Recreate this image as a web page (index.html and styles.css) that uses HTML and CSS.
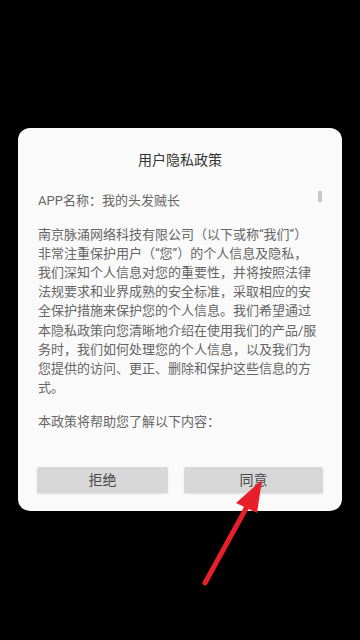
FILE: index.html
```html
<!DOCTYPE html>
<html lang="zh-CN">
<head>
<meta charset="utf-8">
<title>用户隐私政策</title>
<link rel="stylesheet" href="styles.css">
</head>
<body>
<div class="screen">
  <div class="dialog">
    <div class="title">用户隐私政策</div>
    <div class="scroll">
      <p class="para">APP名称：我的头发贼长</p>
      <p class="para">南京脉涌网络科技有限公司（以下或称“我们”）<br>非常注重保护用户（“您”）的个人信息及隐私，<br>我们深知个人信息对您的重要性，并将按照法律<br>法规要求和业界成熟的安全标准，采取相应的安<br>全保护措施来保护您的个人信息。我们希望通过<br>本隐私政策向您清晰地介绍在使用我们的产品/服<br>务时，我们如何处理您的个人信息，以及我们为<br>您提供的访问、更正、删除和保护这些信息的方<br>式。</p>
      <p class="para">本政策将帮助您了解以下内容：</p>
      <div class="scrollbar"></div>
    </div>
    <div class="actions">
      <div class="btn">拒绝</div>
      <div class="btn">同意</div>
    </div>
  </div>
</div>
<svg class="arrow" width="360" height="640" viewBox="0 0 360 640">
  <line x1="205" y1="583" x2="249" y2="503" stroke="#e81e28" stroke-width="5" stroke-linecap="round"/>
  <polygon points="262,480 236,503 257,513" fill="#e81e28"/>
</svg>
</body>
</html>
```
FILE: styles.css
```css
html, body {
  margin: 0;
  padding: 0;
  background: #000;
}
body {
  width: 360px;
  height: 640px;
  overflow: hidden;
  position: relative;
  font-family: Roboto, "Noto Sans CJK SC", sans-serif;
}
.screen {
  padding-top: 128px;
  padding-left: 18px;
}
.dialog {
  width: 324px;
  height: 383px;
  box-sizing: border-box;
  background: #fafafa;
  border-radius: 12px;
  display: flex;
  flex-direction: column;
  padding: 22px 19px 18px 19px;
}
.title {
  font-size: 14px;
  line-height: 20px;
  height: 20px;
  color: #333;
  text-align: center;
}
.scroll {
  position: relative;
  margin-top: 21px;
  height: 264px;
  overflow: hidden;
  padding-left: 1px;
}
.para {
  margin: 0 0 14.4px 0;
  font-size: 13px;
  line-height: 19.2px;
  color: #666;
  white-space: nowrap;
}
.scrollbar {
  position: absolute;
  right: 1px;
  top: 0;
  width: 4px;
  height: 11px;
  background: #c9c9c9;
}
.actions {
  margin-top: 12px;
  display: grid;
  grid-template-columns: 131px 139px;
  column-gap: 16px;
}
.btn {
  height: 26px;
  line-height: 26px;
  background: #d6d7d6;
  color: #4a4a4a;
  font-size: 14px;
  text-align: center;
  border-radius: 2px;
  box-shadow: 0 1px 2px rgba(0,0,0,0.12);
}
.arrow {
  position: absolute;
  left: 0;
  top: 0;
}
```
